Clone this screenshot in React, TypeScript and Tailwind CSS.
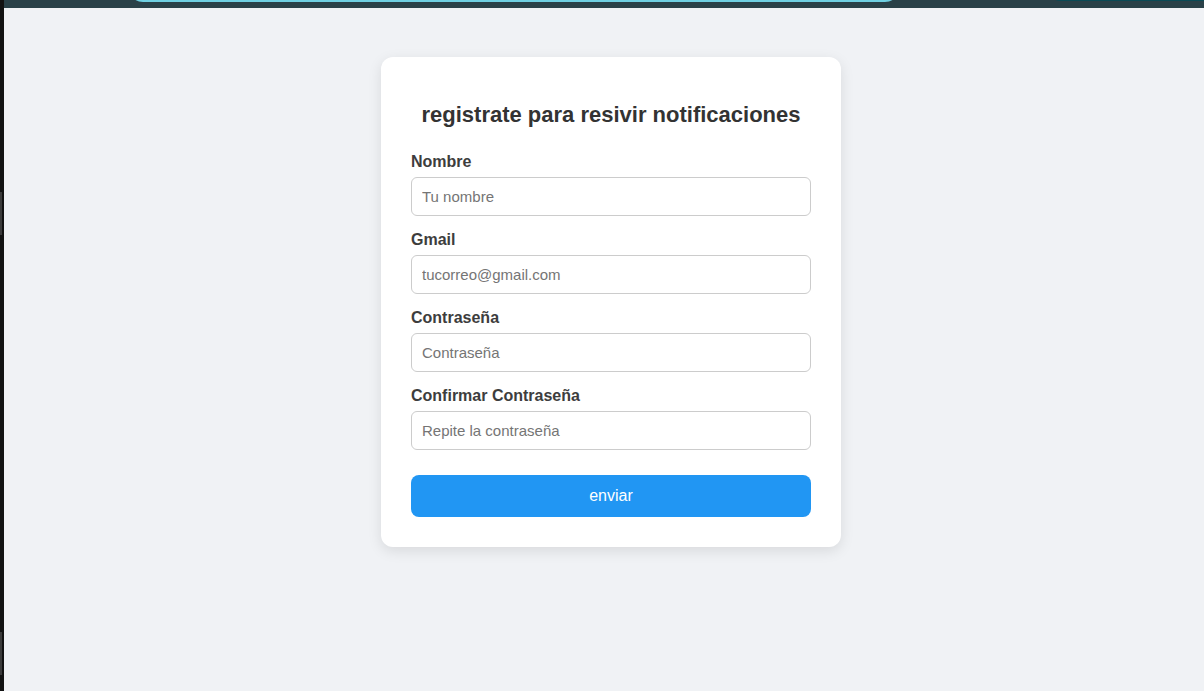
import React from "react";

const fields = [
  { label: "Nombre", placeholder: "Tu nombre", type: "text" },
  { label: "Gmail", placeholder: "tucorreo@gmail.com", type: "email" },
  { label: "Contraseña", placeholder: "Contraseña", type: "password" },
  { label: "Confirmar Contraseña", placeholder: "Repite la contraseña", type: "password" },
];

export default function App() {
  return (
    <div className="flex h-[691px] w-full overflow-hidden bg-[#f0f2f5] font-['Liberation_Sans',Arial,sans-serif]">
      {/* left window edge */}
      <div className="flex w-1 shrink-0 flex-col bg-[#121212]">
        <div className="h-[192px]" />
        <div className="h-[43px] w-[2px] bg-[#3b3b3b]" />
        <div className="h-[397px]" />
        <div className="h-[43px] w-[2px] bg-[#3b3b3b]" />
      </div>

      <div className="flex flex-1 flex-col">
        {/* top bar */}
        <div className="flex h-2 shrink-0 overflow-hidden bg-[#2a4148]">
          <div className="w-[124px] shrink-0" />
          <div className="-mt-[28px] h-[30px] w-[772px] shrink-0 rounded-full border-2 border-[#6fd0e2] bg-[#2a4148]" />
          <div className="flex-1" />
          <div className="-mt-[19px] h-[20px] w-[154px] shrink-0 rounded-l-full bg-[#0b4a55]" />
        </div>

        <main className="flex justify-center pl-[14px] pt-[49px]">
          <form className="flex w-[460px] flex-col rounded-xl bg-white p-[30px] shadow-[0_4px_14px_rgba(0,0,0,0.1)]" onSubmit={(e) => e.preventDefault()}>
            <h2 className="mb-[26px] mt-[15px] text-center text-[22px] font-bold leading-[25px] text-[#333333]">
              registrate para resivir notificaciones
            </h2>
            {fields.map((field) => (
              <div key={field.label} className="mb-[15px] flex flex-col">
                <label className="mb-[6px] text-base font-bold leading-[18px] text-[#3d3d3d]">{field.label}</label>
                <input
                  type={field.type}
                  placeholder={field.placeholder}
                  className="h-[39px] w-full rounded-md border border-[#cccccc] px-[10px] text-[15px] text-[#333] placeholder:text-[#757575] outline-none"
                />
              </div>
            ))}
            <button type="submit" className="mt-[10px] h-[42px] w-full rounded-lg bg-[#2196f3] text-base text-white">
              enviar
            </button>
          </form>
        </main>
      </div>
    </div>
  );
}
